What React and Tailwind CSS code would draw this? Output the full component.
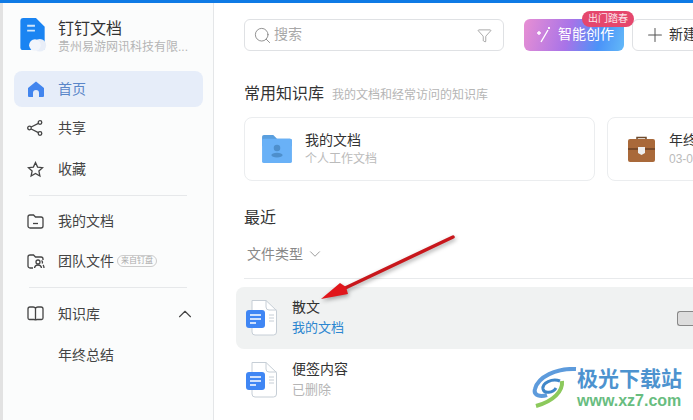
import { ChevronDown, ChevronUp, Plus, Search, Filter } from "lucide-react";

const font = { fontFamily: '"Liberation Sans", "Noto Sans CJK SC", sans-serif' };

// 文档图标：白色纸张 + 蓝色标签
function DocIcon() {
  return (
    <svg width="32" height="36" viewBox="0 0 32 36" fill="none">
      <path d="M6 .5h14l10.500 10V32a3 3 0 0 1-3 3H9a3 3 0 0 1-3-3z" fill="#fff" stroke="#c6ced6" />
      <path d="M20 .5V7a3 3 0 0 0 3 3h7.500" stroke="#c6ced6" />
      <path d="M23 15h5M23 18h5M23 21h5" stroke="#c6ced6" />
      <rect x="0" y="10" width="19" height="18" rx="3" fill="#3f86f4" />
      <path d="M4 15h11M4 19h11M4 23h6" stroke="#fff" strokeWidth="1.600" />
    </svg>
  );
}

function NavItem({ icon, label, active, children }) {
  return (
    <div className={`ml-[11px] mr-[10px] flex h-9 items-center rounded-lg pl-[13px] ${active ? "bg-[#e6edf9] text-[#5a86c8]" : "text-[#444]"}`}>
      <span className="flex w-[31px] items-center">{icon}</span>
      <span className="text-[14px]">{label}</span>
      {children}
    </div>
  );
}

const stroke = { fill: "none", stroke: "#444", strokeWidth: 1.300 };

function Sidebar() {
  return (
    <aside className="flex w-[211px] shrink-0 flex-col border-r border-[#e4e6e8] bg-[#fbfcfc]">
      <div className="flex h-[68px] items-center pl-[15px]">
        <svg width="30" height="35" viewBox="0 0 30 36" className="-mt-[6px]">
          <path d="M5 1h13l9 9v22a2 2 0 0 1-2 2H5a3 3 0 0 1-3-3V4a3 3 0 0 1 3-3z" fill="#1a84f2" />
          <path d="M9 9h8M9 14h8" stroke="#cfe5fb" strokeWidth="2" />
          <circle cx="22" cy="29" r="6.500" fill="#e8eef8" />
          <circle cx="17" cy="29" r="6" fill="#f2f5fb" />
        </svg>
        <div className="ml-[10px] -mt-px">
          <div className="text-[16px] leading-5 text-[#333]">钉钉文档</div>
          <div className="w-[130px] truncate text-[12px] leading-4 text-[#b5b5b5]">贵州易游网讯科技有限...</div>
        </div>
      </div>

      <NavItem
        active
        label="首页"
        icon={
          <svg width="18" height="18" viewBox="0 0 18 18">
            <path d="M9 1.500 1 8v8a1 1 0 0 0 1 1h4v-4a3 3 0 0 1 6 0v4h4a1 1 0 0 0 1-1V8z" fill="#4285ee" />
          </svg>
        }
      />
      <div className="mt-[3px]">
        <NavItem
          label="共享"
          icon={
            <svg width="16" height="16" viewBox="0 0 16 16" {...stroke}>
              <circle cx="2.500" cy="8" r="1.800" />
              <circle cx="13" cy="2.500" r="1.800" />
              <circle cx="13" cy="13.500" r="1.800" />
              <path d="m4.200 7 7.200-3.700M4.200 9l7.200 3.700" />
            </svg>
          }
        />
      </div>
      <div className="mt-[5px]">
        <NavItem
          label="收藏"
          icon={
            <svg width="17" height="17" viewBox="0 0 17 17" {...stroke}>
              <path d="m8.500 1.500 2.100 4.600 5 .6-3.700 3.400 1 4.900-4.400-2.500L4.100 15l1-4.900-3.700-3.400 5-.6z" />
            </svg>
          }
        />
      </div>
      <div className="mx-[26px] mt-[8px] mb-[7px] h-px bg-[#e6e8ea]" />
      <NavItem
        label="我的文档"
        icon={
          <svg width="17" height="15" viewBox="0 0 17 15" {...stroke}>
            <path d="M1 3a2 2 0 0 1 2-2h3.500l2 2H14a2 2 0 0 1 2 2v7a2 2 0 0 1-2 2H3a2 2 0 0 1-2-2z" />
            <path d="M6 9.500h5" />
          </svg>
        }
      />
      <div className="mt-[4px]">
        <NavItem
          label="团队文件"
          icon={
            <svg width="18" height="15" viewBox="0 0 18 15" {...stroke}>
              <path d="M6 14H3a2 2 0 0 1-2-2V3a2 2 0 0 1 2-2h3.500l2 2H14a2 2 0 0 1 2 2v1" />
              <circle cx="11" cy="8" r="2" />
              <path d="M7.500 14c.3-2 1.500-3 3.500-3s3.200 1 3.500 3M14.500 6.500c1 .6 1.300 2 .6 3M16 11c.6.600 1 1.600 1 3" />
            </svg>
          }
        >
          <span className="ml-[3px] rounded-full border border-[#ccc] px-[3px] text-[8px] leading-[10px] text-[#aaa]">来自钉盘</span>
        </NavItem>
      </div>
      <div className="mx-[26px] mt-[8px] mb-[8px] h-px bg-[#e6e8ea]" />
      <NavItem
        label="知识库"
        icon={
          <svg width="17" height="16" viewBox="0 0 17 16" {...stroke}>
            <path d="M8.500 3c0-1.300-1-2-2.500-2H3a2 2 0 0 0-2 2v9a1.500 1.500 0 0 0 1.500 1.500H7c1 0 1.500.5 1.500 1V3c0-1.300 1-2 2.500-2h3a2 2 0 0 1 2 2v9a1.500 1.500 0 0 1-1.500 1.500H10c-1 0-1.500.5-1.500 1" />
          </svg>
        }
      >
        <ChevronUp size={22} strokeWidth={1.200} className="ml-auto mr-[7px] text-[#444]" />
      </NavItem>
      <div className="mt-[5px] ml-[55px] text-[14px] leading-9 text-[#444]">年终总结</div>
    </aside>
  );
}

function Main() {
  return (
    <main className="min-w-0 flex-1 overflow-hidden pl-[30px]">
      {/* 顶部工具条 */}
      <div className="mt-[16px] flex items-center">
        <div className="flex h-8 w-[260px] shrink-0 items-center rounded-md border border-[#dfe1e4] pl-[8px] pr-[11px] text-[14px] text-[#a8a8a8]">
          <Search size={19} strokeWidth={1} className="text-[#777]" />
          <span className="ml-[2px] -mt-px">搜索</span>
          <Filter size={15} strokeWidth={1} className="ml-auto text-[#777]" />
        </div>
        <div className="relative ml-5 flex h-8 w-[100px] shrink-0 items-center rounded-md bg-[linear-gradient(105deg,#e88fd3,#a873e8_45%,#4b93f8_75%,#63b9f8)] pl-[13px] text-[14px] text-white">
          <svg width="14" height="16" viewBox="0 0 14 16" fill="none" stroke="#fff" strokeWidth="1.400">
            <path d="M4 15 11 3M2 4v4M0 6h4M12 0v2M11 1h2" />
          </svg>
          <span className="ml-[7px] -mt-px">智能创作</span>
          <span className="absolute -top-2 right-[-10px] rounded-full bg-[#e5476d] px-[6px] text-[10px] leading-4 text-[#fbe4ea]">出门踏春</span>
        </div>
        <div className="ml-2 flex h-8 w-[120px] shrink-0 items-center rounded-md border border-[#dfe1e4] pl-[11px] text-[14px] text-[#333]">
          <Plus size={22} strokeWidth={1.100} className="text-[#555]" />
          <span className="ml-[3px] -mt-px">新建</span>
        </div>
      </div>

      {/* 常用知识库 */}
      <div className="mt-[33px] flex items-baseline">
        <span className="text-[16px] leading-5 text-[#333]">常用知识库</span>
        <span className="ml-2 text-[12px] text-[#b5b5b5]">我的文档和经常访问的知识库</span>
      </div>
      <div className="mt-[13px] flex gap-3">
        <div className="flex h-[64px] w-[351px] shrink-0 items-center rounded-lg border border-[#ebedef] pl-4">
          <svg width="32" height="28" viewBox="0 0 32 30">
            <path d="M2 0h10l4 4h14a2 2 0 0 1 2 2v6H0V2a2 2 0 0 1 2-2z" fill="#5a9fde" />
            <rect y="4" width="32" height="26" rx="2" fill="#69b1f7" />
            <circle cx="16" cy="14" r="3.500" fill="#4e8fcc" />
            <ellipse cx="16" cy="21.500" rx="6" ry="2.500" fill="#4e8fcc" />
          </svg>
          <div className="ml-3 -mt-px">
            <div className="text-[14px] leading-[18px] text-[#333]">我的文档</div>
            <div className="mt-[2px] text-[12px] leading-4 text-[#bbb]">个人工作文档</div>
          </div>
        </div>
        <div className="flex h-[64px] w-[200px] shrink-0 items-center rounded-lg border border-[#ebedef] pl-5">
          <svg width="27" height="26" viewBox="0 0 27 26">
            <path d="M9 4V1.500h9V4" fill="none" stroke="#6e4a2c" strokeWidth="1.500" />
            <rect y="3" width="27" height="23" rx="2" fill="#a9693a" />
            <path d="M0 13h27" stroke="#6b4024" strokeWidth="1.500" />
            <path d="M10 11h7v6l-3.500 2-3.500-2z" fill="#eee" />
          </svg>
          <div className="ml-[14px] -mt-px">
            <div className="text-[14px] leading-[18px] text-[#333]">年终总结</div>
            <div className="mt-[2px] text-[12px] leading-4 text-[#bbb]">03-01</div>
          </div>
        </div>
      </div>

      {/* 最近 */}
      <div className="mt-[27px] text-[16px] leading-5 text-[#333]">最近</div>
      <div className="mt-[16px] ml-[3px] flex items-center text-[14px] leading-5 text-[#888]">
        文件类型
        <ChevronDown size={18} strokeWidth={1.100} className="ml-[3px] text-[#888]" />
      </div>
      <div className="mt-[14px] h-px bg-[#e8eaec]" />

      <div className="mt-2 -ml-2 flex h-[62px] items-center rounded-l-lg bg-[#f0f2f2] pl-[10px]">
        <DocIcon />
        <div className="ml-[14px] -mt-[2px]">
          <div className="text-[14px] leading-[18px] text-[#333]">散文</div>
          <div className="mt-[4px] text-[13px] leading-4 text-[#2b86d0]">我的文档</div>
        </div>
        <div className="ml-auto h-[15px] w-4 rounded-l-[3px] border border-r-0 border-[#888] bg-[#ddd]" />
      </div>
      <div className="-ml-2 flex h-[62px] items-center pl-[10px]">
        <DocIcon />
        <div className="ml-[14px] -mt-[2px]">
          <div className="text-[14px] leading-[18px] text-[#333]">便签内容</div>
          <div className="mt-[4px] text-[13px] leading-4 text-[#b5b5b5]">已删除</div>
        </div>
      </div>
    </main>
  );
}

export default function App() {
  return (
    <div className="relative flex h-[420px] w-[693px] flex-col overflow-hidden bg-white" style={font}>
      <div className="h-[3px] shrink-0 bg-[#0f7ae5]" />
      <div className="flex min-h-0 flex-1">
        <div className="w-[3px] shrink-0 bg-[#e2e2e2]" />
        <Sidebar />
        <Main />
      </div>

      {/* 红色箭头标注 */}
      <svg className="absolute top-[230px] left-[315px] drop-shadow-[1px_2px_2px_rgba(0,0,0,0.35)]" width="150" height="75" viewBox="0 0 150 75" fill="none">
        <path d="M138 7 26 60" stroke="#c8171c" strokeWidth="3.500" strokeLinecap="round" />
        <path d="M6 69 25 53l6 4 2 7z" fill="#e0161b" />
      </svg>

      {/* 水印 */}
      <div className="absolute top-[366px] left-[532px] flex items-center">
        <svg width="46" height="42" viewBox="0 0 46 42" fill="none">
          <path d="M44 2C24 1 6 10 3 22c-2 7 6 8 12 6" stroke="#5d9bdc" strokeWidth="4" />
          <path d="M28 14c-8-3-18 2-17 8 1 5 10 4 13-1" stroke="#3f87c9" strokeWidth="3" />
          <path d="M30 14c1 10-8 20-26 25" stroke="#8cc95c" strokeWidth="4" />
        </svg>
        <div className="ml-[-1px]">
          <div className="text-[21px] leading-[26px] font-bold text-[#4d93cf]">极光下载站</div>
          <div className="text-[16px] leading-[18px] font-bold text-[#68bd7f]">www.xz7.com</div>
        </div>
      </div>
    </div>
  );
}
